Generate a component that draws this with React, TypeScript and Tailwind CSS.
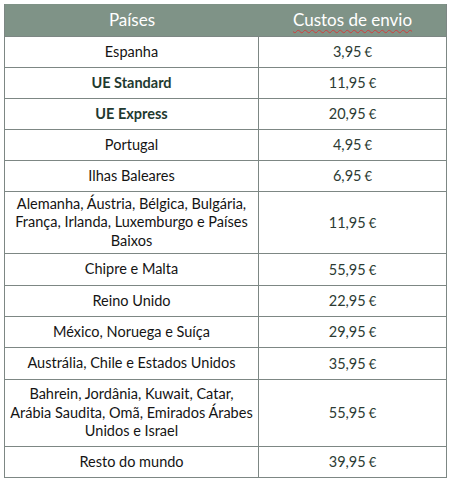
import React from 'react';

type Row = {
  lines: string[];
  price: string;
  bold?: boolean;
  h: string;
};

const rows: Row[] = [
  { lines: ['Espanha'], price: '3,95', h: 'h-[31px]' },
  { lines: ['UE Standard'], price: '11,95', bold: true, h: 'h-[31px]' },
  { lines: ['UE Express'], price: '20,95', bold: true, h: 'h-[31px]' },
  { lines: ['Portugal'], price: '4,95', h: 'h-[31px]' },
  { lines: ['Ilhas Baleares'], price: '6,95', h: 'h-[31px]' },
  {
    lines: [
      'Alemanha, Áustria, Bélgica, Bulgária,',
      'França, Irlanda, Luxemburgo e Países',
      'Baixos',
    ],
    price: '11,95',
    h: 'h-[62px]',
  },
  { lines: ['Chipre e Malta'], price: '55,95', h: 'h-[32px]' },
  { lines: ['Reino Unido'], price: '22,95', h: 'h-[31px]' },
  { lines: ['México, Noruega e Suíça'], price: '29,95', h: 'h-[31px]' },
  { lines: ['Austrália, Chile e Estados Unidos'], price: '35,95', h: 'h-[32px]' },
  {
    lines: [
      'Bahrein, Jordânia, Kuwait, Catar,',
      'Arábia Saudita, Omã, Emirados Árabes',
      'Unidos e Israel',
    ],
    price: '55,95',
    h: 'h-[67px]',
  },
  { lines: ['Resto do mundo'], price: '39,95', h: 'h-[31px]' },
];

const App = () => {
  return (
    <div className="w-[450px] h-[482px] bg-white pt-[4px] pl-[4px] font-['Lato','Liberation_Sans',sans-serif]">
      <div className="w-[443px] border-x border-b border-[#7d8784]">
        {/* header */}
        <div className="flex h-[32px] bg-[#7f9387] text-white text-[17px]">
          <div className="w-[254px] flex items-center justify-center">Países</div>
          <div className="flex-1 flex items-center justify-center">
            <span className="underline decoration-wavy decoration-[#d23c3c] decoration-1 underline-offset-[3px]">
              Custos de envio
            </span>
          </div>
        </div>
        {rows.map((row, idx) => (
          <div
            key={idx}
            className={`flex border-t border-[#7d8784] text-[14.5px] ${row.h}`}
          >
            <div
              className={
                row.bold
                  ? 'w-[254px] border-r border-[#7d8784] flex items-center justify-center text-center leading-[18px] font-bold text-[#1f3a30]'
                  : 'w-[254px] border-r border-[#7d8784] flex items-center justify-center text-center leading-[18.5px] text-[#141414]'
              }
            >
              <div>
                {row.lines.map((l, i) => (
                  <div key={i} className="whitespace-nowrap">
                    {l}
                  </div>
                ))}
              </div>
            </div>
            <div className="flex-1 flex items-center justify-center text-[#2c3b33]">
              <span>
                {row.price}
                <span className="ml-[3px] text-[13px]">€</span>
              </span>
            </div>
          </div>
        ))}
      </div>
    </div>
  );
};

export default App;
